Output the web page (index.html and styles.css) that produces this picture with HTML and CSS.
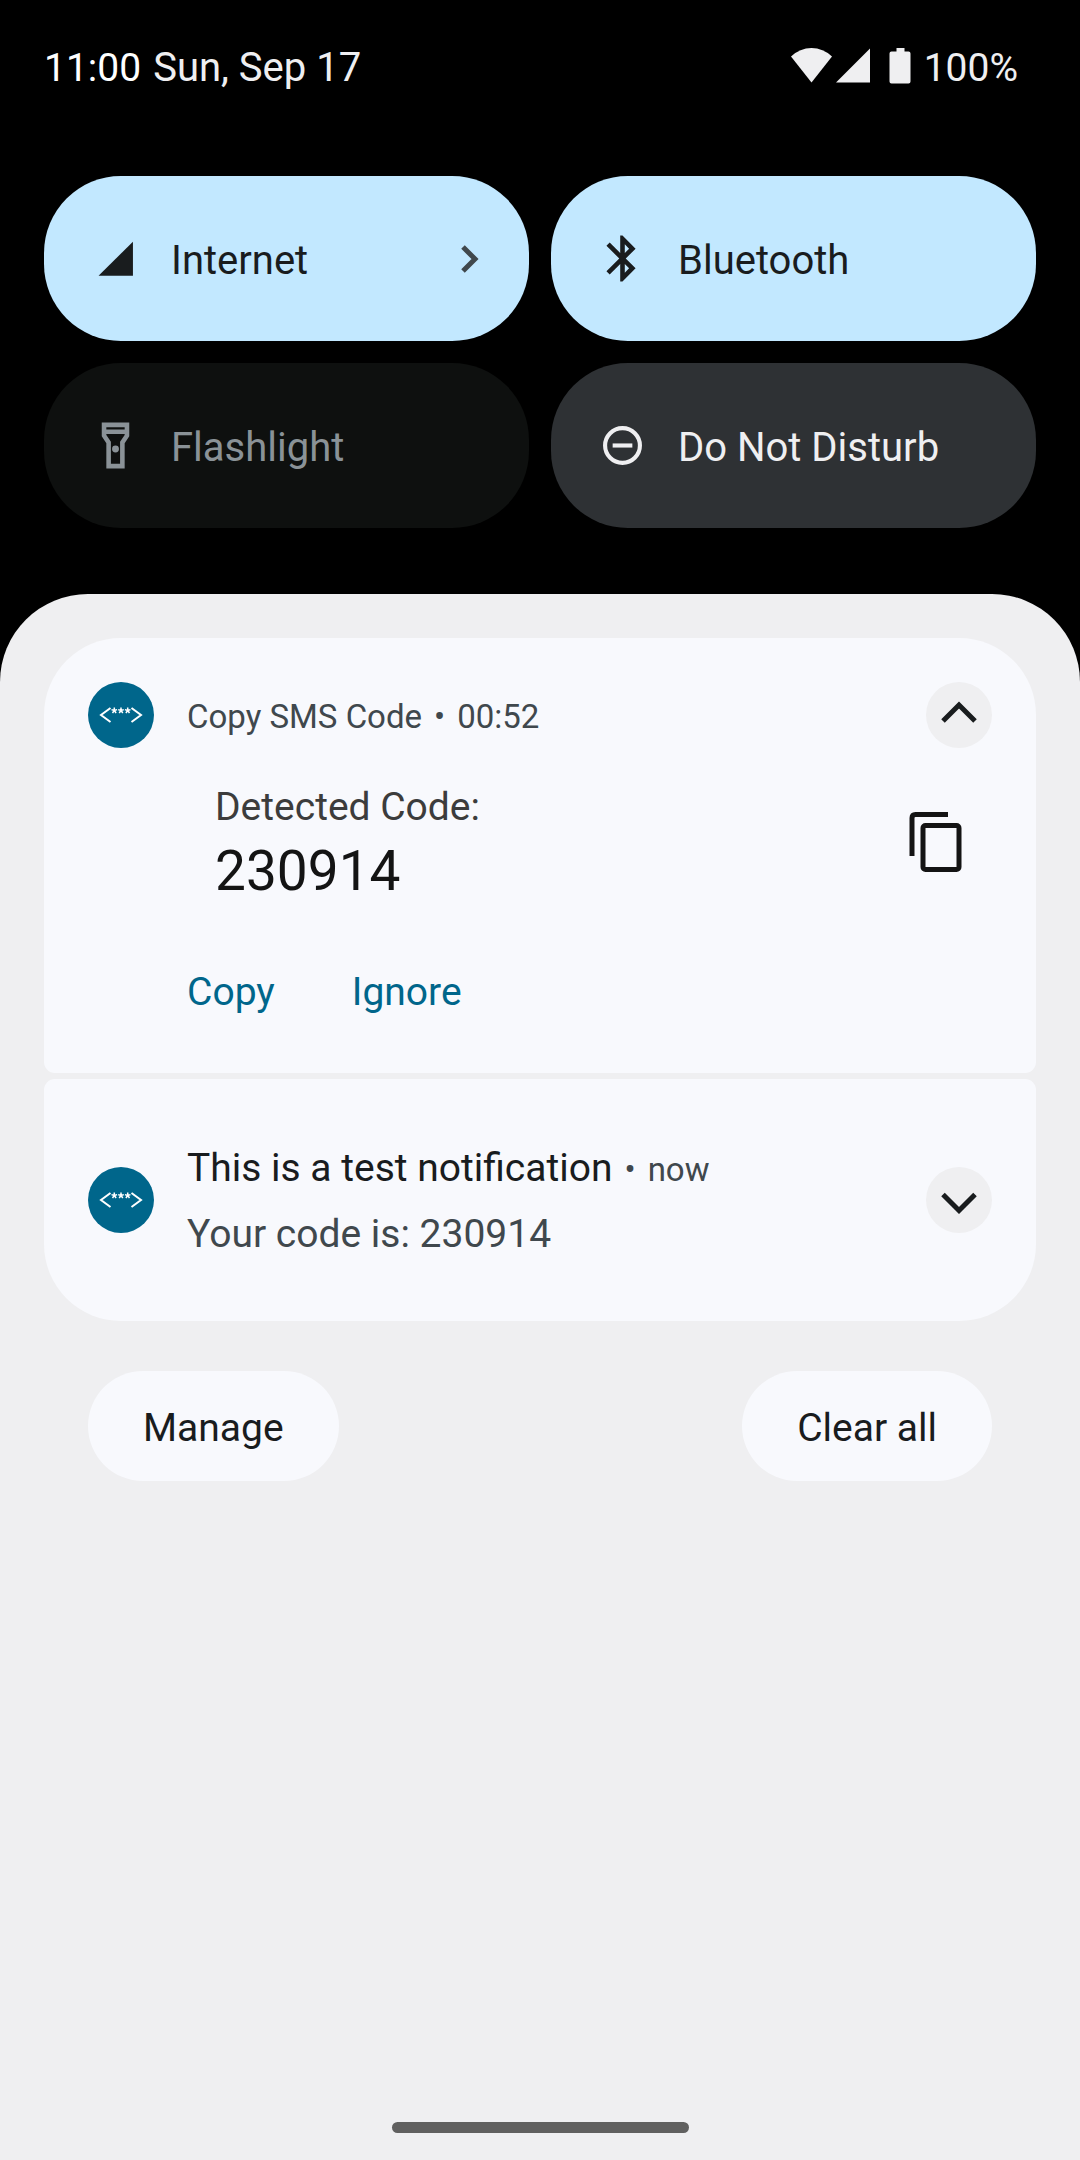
FILE: index.html
```html
<!DOCTYPE html>
<html lang="en">
<head>
<meta charset="utf-8">
<meta name="viewport" content="width=device-width, initial-scale=1">
<title>Notifications</title>
<link rel="stylesheet" href="styles.css">
</head>
<body>
<header class="status">
  <div class="status-clock"><time class="status-time">11:00</time><span class="status-date">Sun, Sep 17</span></div>
  <div class="status-icons">
    <svg class="status-glyphs" viewBox="0 0 122 36" aria-hidden="true">
      <path d="M0 8.500Q9 0 20.500 0T41 8.500L20.500 34.500z"/>
      <path d="M45 34.500L79 0.500V34.500z"/>
      <path d="M105.500 0h8v3.500h4q2 0 2 2v28q0 2-2 2h-17q-2 0-2-2v-28q0-2 2-2h5z"/>
    </svg>
    <span>100%</span>
  </div>
</header>

<section class="tiles" aria-label="Quick settings">
  <button class="tile tile-on" type="button">
    <svg class="tile-icon" viewBox="0 0 24 24" aria-hidden="true"><path d="M4.600 19.500L19.600 4.700V19.500z"/></svg>
    <span class="tile-label">Internet</span>
    <svg class="tile-more" viewBox="0 0 18 28" aria-hidden="true"><path d="M2 2L14 14L2 26"/></svg>
  </button>
  <button class="tile tile-on" type="button">
    <svg class="tile-icon" viewBox="0 0 24 24" aria-hidden="true"><path d="M17.710 7.710L12 2h-1v7.590L6.410 5 5 6.410 10.590 12 5 17.590 6.410 19 11 14.410V22h1l5.710-5.710-4.300-4.290 4.300-4.290zM13 5.830l1.880 1.880L13 9.590V5.830zm1.880 10.460L13 18.170v-3.760l1.880 1.880z"/></svg>
    <span class="tile-label">Bluetooth</span>
  </button>
  <button class="tile tile-unavailable" type="button" disabled>
    <svg class="tile-icon" viewBox="0 0 24 24" aria-hidden="true"><path fill-rule="evenodd" d="M6 2v6l2 3v11h8V11l2-3V2H6zm10 2v1H8V4h8zm-2 6.400V20h-4v-9.600L8 7.400V7h8v.4l-2 3z"/><circle cx="12" cy="13.500" r="1.500"/></svg>
    <span class="tile-label">Flashlight</span>
  </button>
  <button class="tile tile-off" type="button">
    <svg class="tile-icon" viewBox="0 0 24 24" aria-hidden="true"><circle cx="12" cy="12" r="7.600" fill="none" stroke="currentColor" stroke-width="1.800"/><path d="M7.700 11.100h8.600v1.800H7.700z"/></svg>
    <span class="tile-label">Do Not Disturb</span>
  </button>
</section>

<main class="shade">
  <article class="card">
    <div class="card-head">
      <svg class="app-icon" viewBox="0 0 66 66" aria-hidden="true"><circle cx="33" cy="33" r="33"/><path d="M22.500 26L13 33L22.500 40M43.500 26L53 33L43.500 40"/><path class="stars" d="M26.300 28.500v-3M26.300 28.500l2.800-.9M26.300 28.500l-2.800-.9M26.300 28.500l1.800 2.500M26.300 28.500l-1.800 2.500M33 28.500v-3M33 28.500l2.800-.9M33 28.500l-2.800-.9M33 28.500l1.800 2.500M33 28.500l-1.800 2.500M39.700 28.500v-3M39.700 28.500l2.800-.9M39.700 28.500l-2.800-.9M39.700 28.500l1.800 2.500M39.700 28.500l-1.800 2.500"/></svg>
      <div class="meta"><span>Copy SMS Code</span><span class="dot">•</span><time>00:52</time></div>
      <button class="expand" type="button" aria-label="Collapse"><svg viewBox="0 0 66 66" aria-hidden="true"><path d="M17 39L33 23L49 39"/></svg></button>
    </div>
    <div class="detected">
      <div class="detected-text">
        <p class="detected-label">Detected Code:</p>
        <p class="detected-code">230914</p>
      </div>
      <button class="copy" type="button" aria-label="Copy code"><svg viewBox="0 0 66 66" aria-hidden="true"><path d="M8 45V7Q8 3.500 11.500 3.500H44"/><rect x="19" y="14.500" width="36" height="44" rx="2.500"/></svg></button>
    </div>
    <div class="actions">
      <button class="action" type="button">Copy</button>
      <button class="action" type="button">Ignore</button>
    </div>
  </article>

  <article class="card card-compact">
    <svg class="app-icon" viewBox="0 0 66 66" aria-hidden="true"><circle cx="33" cy="33" r="33"/><path d="M22.500 26L13 33L22.500 40M43.500 26L53 33L43.500 40"/><path class="stars" d="M26.300 28.500v-3M26.300 28.500l2.800-.9M26.300 28.500l-2.800-.9M26.300 28.500l1.800 2.500M26.300 28.500l-1.800 2.500M33 28.500v-3M33 28.500l2.800-.9M33 28.500l-2.800-.9M33 28.500l1.800 2.500M33 28.500l-1.800 2.500M39.700 28.500v-3M39.700 28.500l2.800-.9M39.700 28.500l-2.800-.9M39.700 28.500l1.800 2.500M39.700 28.500l-1.800 2.500"/></svg>
    <div class="message">
      <div class="meta"><h2 class="message-title">This is a test notification</h2><span class="dot">•</span><time>now</time></div>
      <p class="message-text">Your code is: 230914</p>
    </div>
    <button class="expand" type="button" aria-label="Expand"><svg viewBox="0 0 66 66" aria-hidden="true"><path d="M17 27.500L33 43.500L49 27.500"/></svg></button>
  </article>

  <div class="shade-footer">
    <button class="pill" type="button">Manage</button>
    <button class="pill" type="button">Clear all</button>
  </div>

  <div class="nav-handle"></div>
</main>
</body>
</html>
```
FILE: styles.css
```css
* {
  box-sizing: border-box;
}

body {
  display: flex;
  flex-direction: column;
  min-height: 100vh;
  margin: 0;
  background: #000;
  color: #191c1e;
  font-family: Roboto, "Noto Sans", sans-serif;
  font-size: 39px;
}

button {
  margin: 0;
  padding: 0;
  border: 0;
  background: none;
  color: inherit;
  font: inherit;
  text-align: left;
}

h2,
p {
  margin: 0;
  font-size: inherit;
  font-weight: 400;
}

svg {
  display: block;
  flex: none;
  fill: currentColor;
}

/* Status bar */

.status {
  display: flex;
  justify-content: space-between;
  padding: 44px 62px 84px 44px;
  color: #efeff1;
  line-height: 48px;
}

.status-clock {
  display: flex;
  align-items: baseline;
  gap: 12px;
}

.status-time {
  color: #fff;
}

.status-date {
  font-size: 40px;
}

.status-icons {
  display: flex;
  gap: 11px;
}

.status-glyphs {
  width: 122px;
  height: 36px;
  margin-top: 4px;
}

/* Quick settings */

.tiles {
  display: grid;
  grid-template-columns: 1fr 1fr;
  gap: 22px;
  padding: 0 44px 66px;
}

.tile {
  display: flex;
  align-items: center;
  gap: 28px;
  height: 165px;
  padding: 0 50px 0 44px;
  border-radius: 77px;
  font-size: 40px;
}

.tile-on {
  background: #c2e8ff;
}

.tile-off {
  background: #2e3134;
  color: #efeff1;
}

.tile-unavailable {
  background: #0e100f;
  color: #8a9297;
}

.tile-icon {
  width: 55px;
  height: 55px;
}

.tile-label {
  flex: 1;
  padding-top: 4px;
}

.tile-more {
  width: 18px;
  height: 28px;
  fill: none;
  stroke: #40484d;
  stroke-width: 5;
}

/* Notification shade */

.shade {
  display: flex;
  flex: 1;
  flex-direction: column;
  padding: 44px 44px 27px;
  border-radius: 88px 88px 0 0;
  background: #efeff1;
}

.card {
  padding: 44px 44px 48px;
  border-radius: 77px 77px 11px 11px;
  background: #f8f9fd;
}

.card-head,
.card-compact {
  display: flex;
  align-items: center;
  gap: 33px;
}

.card-compact {
  margin-top: 6px;
  padding: 55px 44px;
  border-radius: 11px 11px 77px 77px;
}

.app-icon {
  width: 66px;
  height: 66px;
  fill: #00668b;
}

.app-icon path {
  fill: none;
  stroke: #fff;
  stroke-width: 2;
}

.app-icon .stars {
  stroke-width: 1.500;
}

.meta {
  display: flex;
  flex: 1;
  align-items: baseline;
  padding-top: 2px;
  color: #40484d;
  font-size: 33px;
}

.dot {
  padding: 0 12px;
}

.expand {
  flex: none;
  width: 66px;
  height: 66px;
  border-radius: 50%;
  background: #efeff1;
}

.expand path {
  fill: none;
  stroke: #191c1e;
  stroke-width: 5;
}

.detected {
  display: flex;
  align-items: center;
  justify-content: space-between;
  margin-top: 32px;
  padding: 0 22px 0 127px;
}

.detected-label {
  color: #3c3c3c;
  line-height: 54px;
}

.detected-code {
  color: #141414;
  font-size: 55px;
  line-height: 74px;
}

.copy {
  color: #141414;
}

.copy svg {
  width: 66px;
  height: 66px;
  fill: none;
  stroke: currentColor;
  stroke-width: 5;
}

.actions {
  display: flex;
  gap: 77px;
  margin-top: 51px;
  padding-left: 99px;
}

.action {
  height: 66px;
  color: #00668b;
}

.message {
  flex: 1;
  line-height: 64px;
}

.message-title {
  color: #191c1e;
  font-size: 39px;
}

.message-text {
  color: #40484d;
}

.shade-footer {
  display: flex;
  justify-content: space-between;
  margin-top: 50px;
  padding: 0 44px;
}

.pill {
  height: 110px;
  padding: 4px 55px 0;
  border-radius: 55px;
  background: #f8f9fd;
}

.nav-handle {
  width: 297px;
  height: 11px;
  margin: auto auto 0;
  border-radius: 6px;
  background: #606060;
}
```
